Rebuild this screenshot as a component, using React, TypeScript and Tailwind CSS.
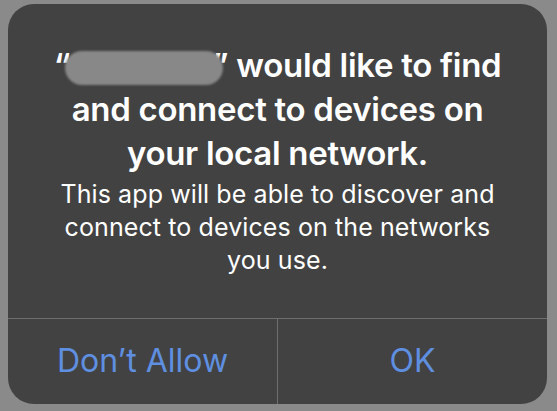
import React from 'react';

export default function App() {
  return (
    <div className="w-[557px] h-[411px] bg-[#8a8a8a] pt-[4px] pl-[8px]" style={{ fontFamily: 'Inter, "Noto Sans", sans-serif' }}>
      <div className="w-[539px] h-[400px] bg-[#424242] rounded-[26px] flex flex-col overflow-hidden">
        {/* Message */}
        <div className="pt-[39px] pb-[40px] px-[10px] text-center text-white flex-1">
          <h1 className="text-[33px] leading-[44px] font-semibold tracking-[-0.3px] whitespace-nowrap">
            <span className="relative">
              “
              <span className="inline-block align-middle w-[158px] h-[34px] -ml-[5px] -mr-[11px] rounded-full bg-[#888888] blur-[1px]" />
              ”
            </span>{' '}
            would like to find
            <br />
            and connect to devices on
            <br />
            your local network.
          </h1>
          <p className="mt-[3px] text-[25px] leading-[33px] font-normal tracking-[0.1px] whitespace-nowrap">
            This app will be able to discover and
            <br />
            connect to devices on the networks
            <br />
            you use.
          </p>
        </div>
        {/* Buttons */}
        <div className="h-[86px] border-t border-[#6e6e6e] flex">
          <button className="flex-1 flex items-center justify-center text-[32px] text-[#5f8fe0] pb-[2px]">Don’t Allow</button>
          <div className="w-px bg-[#6e6e6e]" />
          <button className="flex-1 flex items-center justify-center text-[32px] text-[#5f8fe0] pb-[2px]">OK</button>
        </div>
      </div>
    </div>
  );
}
